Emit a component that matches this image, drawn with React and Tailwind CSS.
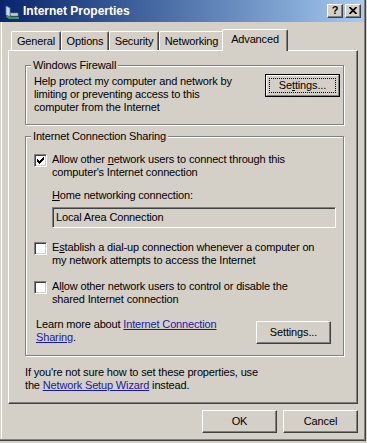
import React from "react";

const raised =
  "border border-t-white border-l-white border-r-[#404040] border-b-[#404040] shadow-[inset_-1px_-1px_0_#808080]";
const sunken =
  "border border-t-[#808080] border-l-[#808080] border-b-white border-r-white shadow-[inset_1px_1px_0_#404040,inset_-1px_-1px_0_#d4d0c8]";
const etched =
  "relative border border-[#808080] shadow-[inset_1px_1px_0_#fff,1px_1px_0_#fff]";

function U({ children }) {
  return <span className="underline">{children}</span>;
}

function Link({ children }) {
  return <span className="text-[#1a1aa6] underline">{children}</span>;
}

function Button({ children, def = false, className = "" }) {
  if (def) {
    return (
      <div className={`w-[75px] h-[23px] border border-black flex ${className}`}>
        <div className="flex-1 flex border border-t-white border-l-white border-r-[#808080] border-b-[#808080] p-[2px]">
          <div className="flex-1 border border-dotted border-black flex items-center justify-center">
            {children}
          </div>
        </div>
      </div>
    );
  }
  return (
    <div className={`w-[75px] h-[23px] flex items-center justify-center ${raised} ${className}`}>
      {children}
    </div>
  );
}

const CHECK = [
  "......#",
  ".....##",
  "#...###",
  "##.###.",
  "#####..",
  ".###...",
  "..#....",
];

function Checkbox({ checked }) {
  return (
    <div className={`w-[13px] h-[13px] shrink-0 mt-[1px] bg-white flex items-center justify-center ${sunken}`}>
      {checked && (
        <svg width="7" height="7" viewBox="0 0 7 7" shapeRendering="crispEdges">
          {CHECK.flatMap((row, y) =>
            row.split("").map((c, x) =>
              c === "#" ? <rect key={`${x}-${y}`} x={x} y={y} width="1" height="1" fill="#000" /> : null
            )
          )}
        </svg>
      )}
    </div>
  );
}

function GroupLegend({ children }) {
  return (
    <div className="absolute left-[5px] top-[-7px] px-[2px] bg-[#d4d0c8] whitespace-nowrap">
      {children}
    </div>
  );
}

function Tab({ children, w }) {
  return (
    <div
      className={`${w} h-[19px] border-t border-l border-r border-t-white border-l-white border-r-[#404040] shadow-[inset_-1px_0_0_#808080] rounded-t-[2px] pt-[3px] text-center whitespace-nowrap`}
    >
      {children}
    </div>
  );
}

export default function App() {
  return (
    <div className="w-[367px] h-[443px] bg-[#d4d0c8] overflow-hidden font-['Liberation_Sans',Arial,sans-serif] text-[11px] leading-[13px] tracking-[-0.15px] text-black">
      <div className="w-[366px] h-[441px] border-r border-b border-[#404040] flex flex-col">
        <div className="flex-1 border-r border-b border-[#808080] flex flex-col min-h-0">
          {/* Title bar */}
          <div className="h-[22px] shrink-0 bg-gradient-to-r from-[#0a246a] to-[#a6caf0] flex items-center">
            <svg className="ml-[3px] shrink-0" width="16" height="16" viewBox="0 0 16 16">
              <path d="M3 3 L7 5 L7 14 L3 12 Z" fill="#c8dcf0" stroke="#5a7fa8" strokeWidth="0.8" />
              <path d="M4 12 L8 14 L16 14 L16 16 L6 16 L3 14 Z" fill="#3f9a5a" />
              <path d="M7 10 L15 10 L15 13 L8 13 Z" fill="#b9d0c0" stroke="#6f8f7a" strokeWidth="0.6" />
            </svg>
            <span className="ml-[4px] text-white font-bold text-[12px] leading-[14px] tracking-normal whitespace-nowrap">
              Internet Properties
            </span>
            <div className="ml-auto flex gap-[2px] mr-[3px]">
              <div className={`w-[16px] h-[14px] bg-[#d4d0c8] flex items-center justify-center ${raised}`}>
                <span className="font-bold text-[11px] leading-[11px] tracking-normal -mt-[1px]">?</span>
              </div>
              <div className={`w-[16px] h-[14px] bg-[#d4d0c8] flex items-center justify-center ${raised}`}>
                <svg width="8" height="7" viewBox="0 0 8 7" className="-mt-[1px]">
                  <path d="M0.5 0 L7.5 7 M7.5 0 L0.5 7" stroke="#000" strokeWidth="1.7" />
                </svg>
              </div>
            </div>
          </div>

          {/* Body */}
          <div className="flex-1 ml-[1px] border-l border-white pl-[6px] pt-[7px] flex flex-col">
            {/* Tab strip */}
            <div className="h-[21px] flex items-end pl-[3px]">
              <Tab w="w-[50px]">General</Tab>
              <Tab w="w-[48px]">Options</Tab>
              <Tab w="w-[50px]">Security</Tab>
              <Tab w="w-[65px]">Networking</Tab>
              <div className="relative z-10 -ml-[2px] -mb-[1px] w-[66px] h-[22px] bg-[#d4d0c8] border-t border-l border-r border-t-white border-l-white border-r-[#404040] shadow-[inset_-1px_0_0_#808080] rounded-t-[2px] pt-[3px] text-center">
                Advanced
              </div>
            </div>

            {/* Tab page */}
            <div className={`w-[350px] h-[354px] pl-[16px] pt-[14px] ${raised}`}>
              {/* Windows Firewall */}
              <div className={`w-[319px] h-[60px] ${etched} pl-[8px] pt-[9px] pr-[3px] flex items-start justify-between`}>
                <GroupLegend>Windows Firewall</GroupLegend>
                <div className="whitespace-nowrap">
                  Help protect my computer and network by
                  <br />
                  limiting or preventing access to this
                  <br />
                  computer from the Internet
                </div>
                <Button def className="-mt-[1px]">
                  Se<U>t</U>tings...
                </Button>
              </div>

              {/* Internet Connection Sharing */}
              <div className={`mt-[11px] w-[319px] h-[220px] ${etched} pl-[8px] pt-[16px] flex flex-col`}>
                <GroupLegend>Internet Connection Sharing</GroupLegend>
                <div className="flex items-start">
                  <Checkbox checked />
                  <div className="ml-[5px] whitespace-nowrap">
                    Allow other <U>n</U>etwork users to connect through this
                    <br />
                    computer's Internet connection
                  </div>
                </div>
                <div className="mt-[10px] ml-[18px] whitespace-nowrap">
                  <U>H</U>ome networking connection:
                </div>
                <div className={`mt-[5px] ml-[18px] w-[284px] h-[21px] pl-[3px] pt-[3px] ${sunken}`}>
                  Local Area Connection
                </div>
                <div className="mt-[13px] flex items-start">
                  <Checkbox />
                  <div className="ml-[5px] whitespace-nowrap">
                    E<U>s</U>tablish a dial-up connection whenever a computer on
                    <br />
                    my network attempts to access the Internet
                  </div>
                </div>
                <div className="mt-[13px] flex items-start">
                  <Checkbox />
                  <div className="ml-[5px] whitespace-nowrap">
                    Al<U>l</U>ow other network users to control or disable the
                    <br />
                    shared Internet connection
                  </div>
                </div>
                <div className="mt-[12px] flex items-start">
                  <div className="ml-[2px] whitespace-nowrap">
                    Learn more about <Link>Internet Connection</Link>
                    <br />
                    <Link>Sharing</Link>.
                  </div>
                  <Button className="ml-auto mr-[12px] mt-[3px]">Settings...</Button>
                </div>
              </div>

              <div className="mt-[10px] whitespace-nowrap">
                If you're not sure how to set these properties, use
                <br />
                the <Link>Network Setup Wizard</Link> instead.
              </div>
            </div>

            {/* Dialog buttons */}
            <div className="w-[350px] mt-[6px] flex justify-end gap-[6px]">
              <Button>OK</Button>
              <Button>Cancel</Button>
            </div>
          </div>
        </div>
      </div>
    </div>
  );
}
